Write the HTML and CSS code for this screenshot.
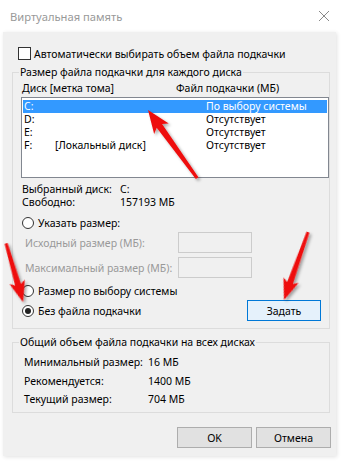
FILE: index.html
```html
<!DOCTYPE html>
<html lang="ru">
<head>
    <meta charset="UTF-8">
    <meta name="viewport" content="width=device-width, initial-scale=1.0">
    <title>Виртуальная память</title>
    <link rel="stylesheet" href="styles.css">
</head>
<body>
    <div class="window">
        <div class="titlebar">
            <span class="title">Виртуальная память</span>
            <svg class="close" width="12" height="12" viewBox="0 0 12 12">
                <path d="M1 1L11 11M11 1L1 11" stroke="#8a8a8a" stroke-width="1" fill="none"/>
            </svg>
        </div>

        <div class="dialog">
            <div class="check-row"><span class="checkbox"></span>Автоматически выбирать объем файла подкачки</div>

            <div class="group group-disks">
                <span class="group-title">Размер файла подкачки для каждого диска</span>
                <div class="list-head">
                    <span class="col-disk">Диск [метка тома]</span>
                    <span>Файл подкачки (МБ)</span>
                </div>
                <div class="listbox">
                    <div class="row selected"><span class="c1">C:</span><span class="c2"></span><span>По выбору системы</span></div>
                    <div class="row"><span class="c1">D:</span><span class="c2"></span><span>Отсутствует</span></div>
                    <div class="row"><span class="c1">E:</span><span class="c2"></span><span>Отсутствует</span></div>
                    <div class="row"><span class="c1">F:</span><span class="c2">[Локальный диск]</span><span>Отсутствует</span></div>
                </div>

                <div class="info first"><span class="info-label">Выбранный диск:</span><span>C:</span></div>
                <div class="info"><span class="info-label">Свободно:</span><span>157193 МБ</span></div>

                <div class="radio-row first"><span class="radio"></span>Указать размер:</div>
                <div class="size-row first"><span class="size-label">Исходный размер (МБ):</span><span class="size-input"></span></div>
                <div class="size-row"><span class="size-label">Максимальный размер (МБ):</span><span class="size-input"></span></div>
                <div class="radio-row second"><span class="radio"></span>Размер по выбору системы</div>
                <div class="last-row">
                    <div class="radio-row"><span class="radio checked"></span>Без файла подкачки</div>
                    <button class="btn btn-primary">Задать</button>
                </div>
            </div>

            <div class="group group-total">
                <span class="group-title">Общий объем файла подкачки на всех дисках</span>
                <div class="total-row"><span class="total-label">Минимальный размер:</span><span>16 МБ</span></div>
                <div class="total-row"><span class="total-label">Рекомендуется:</span><span>1400 МБ</span></div>
                <div class="total-row"><span class="total-label">Текущий размер:</span><span>704 МБ</span></div>
            </div>

            <div class="buttons">
                <button class="btn">OK</button>
                <button class="btn">Отмена</button>
            </div>
        </div>
    </div>

    <!-- красные стрелки поверх окна -->
    <svg class="arrows" width="341" height="461" viewBox="0 0 341 461">
        <defs>
            <filter id="shadow" x="-50%" y="-50%" width="200%" height="200%">
                <feDropShadow dx="2" dy="2" stdDeviation="1.5" flood-color="#000" flood-opacity="0.35"/>
            </filter>
        </defs>
        <g fill="#ee1111" filter="url(#shadow)">
            <path transform="translate(148,110) rotate(-35.8)" d="M0 0L9 23L3.3 19.5L1.6 84L-1.6 84L-3.3 19.5L-9 23Z"/>
            <path transform="translate(23,302) rotate(163.9)" d="M0 0L8 21L3 18L1.5 61L-1.5 61L-3 18L-8 21Z"/>
            <path transform="translate(284,300) rotate(-160.5)" d="M0 0L8 21L3 18L1.5 72L-1.5 72L-3 18L-8 21Z"/>
        </g>
    </svg>
</body>
</html>
```

FILE: styles.css
```css
body {
    margin: 0;
    background: #fff;
    font-family: "Noto Sans", "DejaVu Sans", sans-serif;
    font-size: 10.5px;
    color: #000;
    white-space: nowrap;
    position: relative;
    width: 341px;
    height: 461px;
    overflow: hidden;
}

.window {
    width: 336px;
}

.titlebar {
    height: 32px;
    display: flex;
    align-items: center;
    justify-content: space-between;
    padding: 0 6px 0 10px;
    box-sizing: border-box;
}

.title {
    color: #999;
    font-size: 11.2px;
}

.dialog {
    margin-left: 3px;
    width: 333px;
    height: 424px;
    background: #f0f0f0;
    box-shadow: 1px 1px 4px rgba(0, 0, 0, 0.12);
    padding-top: 15px;
    box-sizing: border-box;
}

.check-row {
    display: flex;
    align-items: center;
    height: 13px;
    padding-left: 15px;
    gap: 3px;
}

.checkbox {
    flex-shrink: 0;
    width: 13px;
    height: 13px;
    border: 1px solid #333;
    background: #fff;
    box-sizing: border-box;
}

.group {
    position: relative;
    margin-left: 9px;
    width: 318px;
    border: 1px solid #dcdcdc;
    box-sizing: border-box;
}

.group-title {
    position: absolute;
    left: 6px;
    top: -8.5px;
    line-height: 15px;
    padding: 0 1px;
    background: #f0f0f0;
}

.group-disks {
    margin-top: 12px;
    height: 257px;
}

.list-head {
    display: flex;
    height: 14px;
    line-height: 14px;
    margin-top: 8px;
    padding-left: 9px;
}

.col-disk {
    flex-shrink: 0;
    width: 154px;
}

.listbox {
    margin: 2px 0 0 8px;
    width: 308px;
    height: 81px;
    border: 1px solid #828790;
    background: #fff;
    box-sizing: border-box;
    padding: 2px 1px 0;
}

.row {
    display: flex;
    height: 13px;
    line-height: 13px;
    padding-left: 1px;
}

.row.selected {
    background: #3399ff;
    color: #fff;
}

.c1 {
    flex-shrink: 0;
    width: 31px;
}

.c2 {
    flex-shrink: 0;
    width: 151px;
}

.info {
    display: flex;
    height: 13px;
    line-height: 13px;
    padding-left: 9px;
}

.info.first {
    margin-top: 5px;
}

.info-label {
    flex-shrink: 0;
    width: 98px;
}

.radio-row {
    display: flex;
    align-items: center;
    height: 14px;
    padding-left: 9px;
    gap: 4px;
}

.radio-row.first {
    margin-top: 7px;
}

.radio-row.second {
    margin-top: 6px;
}

.radio {
    flex-shrink: 0;
    width: 12px;
    height: 12px;
    border: 1px solid #333;
    border-radius: 50%;
    background: #fff;
    box-sizing: border-box;
    display: flex;
    align-items: center;
    justify-content: center;
}

.radio.checked::after {
    content: "";
    width: 6px;
    height: 6px;
    border-radius: 50%;
    background: #222;
}

.size-row {
    display: flex;
    align-items: center;
    height: 21px;
    padding-left: 12px;
    margin-top: 4px;
    color: #999;
}

.size-row.first {
    margin-top: 2px;
}

.size-label {
    flex-shrink: 0;
    width: 153px;
}

.size-input {
    flex-shrink: 0;
    width: 74px;
    height: 21px;
    border: 1px solid #ccc;
    background: #f0f0f0;
    box-sizing: border-box;
}

.last-row {
    display: flex;
    align-items: center;
    justify-content: space-between;
    height: 21px;
    margin-top: 2px;
    padding-right: 8px;
}

.btn {
    width: 75px;
    height: 21px;
    padding: 0;
    border: 1px solid #adadad;
    background: #e1e1e1;
    font: inherit;
    color: #000;
    box-sizing: border-box;
}

.btn-primary {
    width: 74px;
    border-color: #0078d7;
    background: #e5f1fb;
}

.group-total {
    margin-top: 13px;
    height: 71px;
    padding: 10px 0 0 11px;
}

.total-row {
    display: flex;
    height: 18.5px;
    line-height: 18.5px;
}

.total-label {
    flex-shrink: 0;
    width: 124px;
}

.buttons {
    display: flex;
    justify-content: flex-end;
    gap: 4px;
    margin-top: 14px;
    padding-right: 5px;
}

.arrows {
    position: absolute;
    left: 0;
    top: 0;
    pointer-events: none;
}
```
